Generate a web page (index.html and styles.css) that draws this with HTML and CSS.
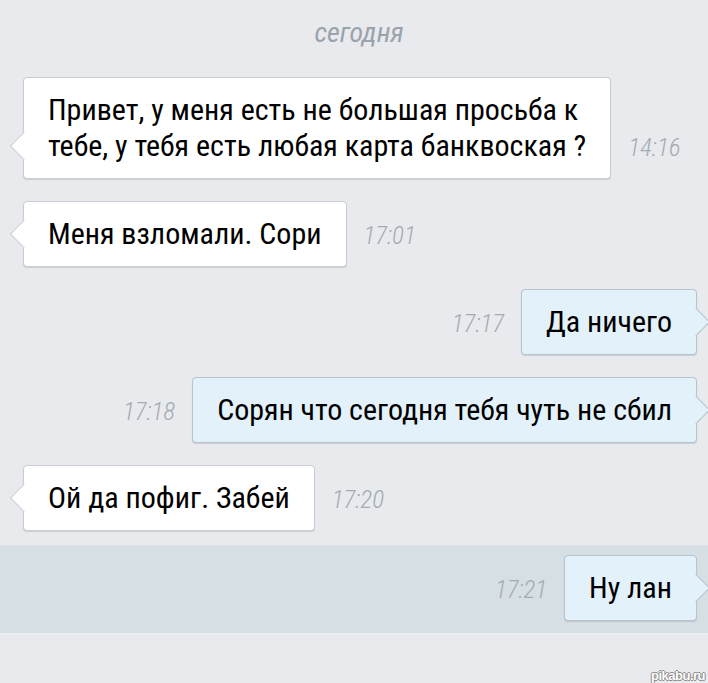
FILE: index.html
```html
<!DOCTYPE html>
<html lang="ru">
<head>
  <meta charset="UTF-8">
  <title>Сообщения</title>
  <link rel="stylesheet" href="styles.css">
</head>
<body>
  <div class="chat">
    <div class="date">сегодня</div>

    <!-- входящие и исходящие сообщения -->
    <div class="row in">
      <div class="bubble">Привет, у меня есть не большая просьба к<br>тебе, у тебя есть любая карта банквоская ?</div>
      <span class="time">14:16</span>
    </div>

    <div class="row in">
      <div class="bubble">Меня взломали. Сори</div>
      <span class="time">17:01</span>
    </div>

    <div class="row out">
      <span class="time">17:17</span>
      <div class="bubble">Да ничего</div>
    </div>

    <div class="row out">
      <span class="time">17:18</span>
      <div class="bubble">Сорян что сегодня тебя чуть не сбил</div>
    </div>

    <div class="row in">
      <div class="bubble">Ой да пофиг. Забей</div>
      <span class="time">17:20</span>
    </div>

    <div class="row out unread">
      <span class="time">17:21</span>
      <div class="bubble">Ну лан</div>
    </div>
  </div>

  <div class="watermark">pikabu.ru</div>
</body>
</html>
```

FILE: styles.css
```css
body {
  margin: 0;
  background-color: #e8eaed;
  font-family: Roboto, "Noto Sans", sans-serif;
  font-stretch: condensed;
  color: #000;
  overflow: hidden;
}
.chat {
  min-height: 683px;
}
.date {
  height: 66px;
  box-sizing: border-box;
  padding-top: 18px;
  padding-left: 10px;
  line-height: 30px;
  text-align: center;
  font-size: 28px;
  font-style: italic;
  color: #9aa3ac;
}
.row {
  display: flex;
  align-items: last baseline;
  gap: 17px;
  padding: 11px 11px 11px 23px;
}
.row.out {
  justify-content: flex-end;
}
.row.unread {
  background-color: #d6dfe4;
  border-top: 1px solid #dde4e8;
  border-bottom: 1px solid #eef1f2;
  margin-top: 3px;
  padding-top: 9px;
  padding-bottom: 12px;
}
.bubble {
  position: relative;
  padding: 14px 24px;
  font-size: 30px;
  line-height: 36px;
  background: #fff;
  border: 1px solid #c9ced4;
  border-radius: 4px;
  box-shadow: 0 1px 1px rgba(0,0,0,0.12);
}
.bubble::before {
  content: "";
  position: absolute;
  bottom: 22px;
  width: 20px;
  height: 20px;
  box-sizing: border-box;
  background: inherit;
  transform: rotate(45deg);
}
.in .bubble::before {
  left: -10px;
  border-left: 1px solid #c9ced4;
  border-bottom: 1px solid #c9ced4;
}
.out .bubble {
  background: #e3f1fb;
  border-color: #b7c3cd;
}
.out .bubble::before {
  right: -10px;
  border-top: 1px solid #b7c3cd;
  border-right: 1px solid #b7c3cd;
}
.time {
  font-size: 25px;
  font-style: italic;
  font-weight: 300;
  color: #a3abb3;
}
.watermark {
  position: absolute;
  right: 3px;
  bottom: 0;
  font-family: "Liberation Sans", sans-serif;
  font-size: 13px;
  font-weight: bold;
  letter-spacing: -0.5px;
  color: #fff;
  text-shadow: 1px 0 #888, -1px 0 #888, 0 1px #888, 0 -1px #888;
}
```
